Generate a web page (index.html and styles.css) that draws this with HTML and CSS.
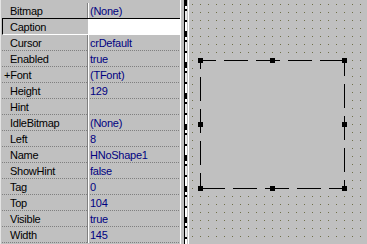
FILE: index.html
```html
<!DOCTYPE html>
<html>
<head>
<meta charset="utf-8">
<link rel="stylesheet" href="styles.css">
</head>
<body>
<div class="screen">
  <div class="inspector">
    <div class="row"><span class="name">Bitmap</span><span class="val">(None)</span></div>
    <div class="row sel"><span class="name">Caption</span><span class="val"></span></div>
    <div class="row"><span class="name">Cursor</span><span class="val">crDefault</span></div>
    <div class="row"><span class="name">Enabled</span><span class="val">true</span></div>
    <div class="row"><span class="name"><span class="plus">+</span>Font</span><span class="val">(TFont)</span></div>
    <div class="row"><span class="name">Height</span><span class="val">129</span></div>
    <div class="row"><span class="name">Hint</span><span class="val"></span></div>
    <div class="row"><span class="name">IdleBitmap</span><span class="val">(None)</span></div>
    <div class="row"><span class="name">Left</span><span class="val">8</span></div>
    <div class="row"><span class="name">Name</span><span class="val">HNoShape1</span></div>
    <div class="row"><span class="name">ShowHint</span><span class="val">false</span></div>
    <div class="row"><span class="name">Tag</span><span class="val">0</span></div>
    <div class="row"><span class="name">Top</span><span class="val">104</span></div>
    <div class="row"><span class="name">Visible</span><span class="val">true</span></div>
    <div class="row"><span class="name">Width</span><span class="val">145</span></div>
  </div>
  <div class="splitter"></div>
  <svg class="form" width="178" height="244" viewBox="189 0 178 244">
    <defs>
      <pattern id="dots" x="192" y="4" width="8" height="8" patternUnits="userSpaceOnUse">
        <rect width="1" height="1" fill="#6f6f48"/>
      </pattern>
    </defs>
    <rect x="189" y="0" width="178" height="244" fill="url(#dots)"/>
    <rect x="200" y="60" width="145" height="129" fill="#c0c0c0"/>
    <g stroke="#000" stroke-width="1" stroke-dasharray="24 8" stroke-dashoffset="8" fill="none">
      <line x1="200" y1="60.5" x2="345" y2="60.5"/>
      <line x1="344.5" y1="60" x2="344.5" y2="189"/>
      <line x1="345" y1="188.5" x2="200" y2="188.5"/>
      <line x1="200.5" y1="189" x2="200.5" y2="60"/>
    </g>
    <g fill="#000">
      <rect x="198" y="58" width="5" height="5"/>
      <rect x="270" y="58" width="5" height="5"/>
      <rect x="342" y="58" width="5" height="5"/>
      <rect x="198" y="122" width="5" height="5"/>
      <rect x="342" y="122" width="5" height="5"/>
      <rect x="198" y="186" width="5" height="5"/>
      <rect x="270" y="186" width="5" height="5"/>
      <rect x="342" y="186" width="5" height="5"/>
    </g>
  </svg>
</div>
</body>
</html>
```

FILE: styles.css
```css
html, body {
  margin: 0;
  padding: 0;
  background: #c0c0c0;
  overflow: hidden;
}

.screen {
  display: flex;
  width: 367px;
  height: 244px;
  font-family: "Liberation Sans", Arial, sans-serif;
  font-size: 11px;
  letter-spacing: -0.25px;
}

.inspector {
  width: 178px;
  flex: none;
  border-left: 1px solid #e4e4e4;
  padding-left: 1px;
  border-right: 1px solid #ffffff;
  padding-top: 3px;
  display: flex;
  flex-direction: column;
}

.row {
  display: grid;
  grid-template-columns: 86px 1fr;
  height: 16px;
  background: repeating-linear-gradient(90deg, #808080 0 1px, transparent 1px 2px) left bottom / 100% 1px no-repeat;
}

.name {
  border-right: 1px solid #808080;
  padding: 1px 0 0 8px;
  line-height: 14px;
  color: #000;
  white-space: nowrap;
}

.plus {
  margin-left: -6px;
}

.val {
  border-left: 1px solid #ffffff;
  padding: 1px 0 0 1px;
  line-height: 14px;
  color: #000080;
  white-space: nowrap;
}

.row.sel {
  margin-top: -1px;
  height: 15px;
  border-top: 1px solid #000;
  border-left: 1px solid #000;
  border-bottom: 1px solid #fff;
  background: none;
  grid-template-columns: 85px 1fr;
}

.row.sel .name {
  padding-left: 7px;
  border-right-color: #c0c0c0;
}

.row.sel .val {
  background: #fff;
}

.splitter {
  width: 8px;
  flex: none;
  background:
    repeating-linear-gradient(180deg, #000 0 6px, #fff 6px 9px, #000 9px 11px, #e8e8e8 11px 20px, #000 20px 22px, #fff 22px 31px) 4px 0 / 2px 100% no-repeat,
    linear-gradient(90deg, #c0c0c0 0 3px, #000 3px 4px, #c0c0c0 4px 7px, #fff 7px 8px);
}

.form {
  display: block;
  flex: none;
}
```
